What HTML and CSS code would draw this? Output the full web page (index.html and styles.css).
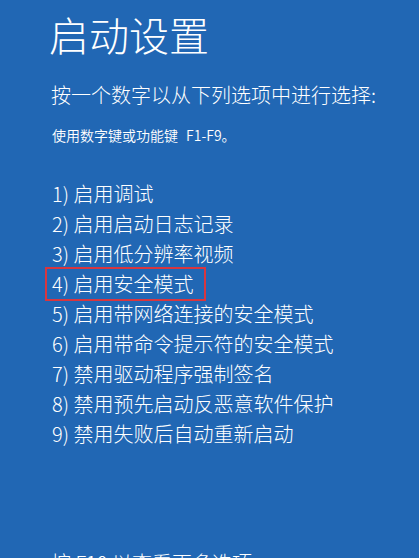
FILE: index.html
```html
<!DOCTYPE html>
<html lang="zh-CN">
<head>
<meta charset="utf-8">
<title>启动设置</title>
<link rel="stylesheet" href="styles.css">
</head>
<body>
<main class="screen">
  <h1 class="title">启动设置</h1>
  <p class="subtitle">按一个数字以从下列选项中进行选择:</p>
  <p class="hint">使用数字键或功能键 F1-F9。</p>
  <ol class="options">
    <li class="option">1) 启用调试</li>
    <li class="option">2) 启用启动日志记录</li>
    <li class="option">3) 启用低分辨率视频</li>
    <li class="option option-selected">4) 启用安全模式</li>
    <li class="option">5) 启用带网络连接的安全模式</li>
    <li class="option">6) 启用带命令提示符的安全模式</li>
    <li class="option">7) 禁用驱动程序强制签名</li>
    <li class="option">8) 禁用预先启动反恶意软件保护</li>
    <li class="option">9) 禁用失败后自动重新启动</li>
  </ol>
  <p class="more">按 F10 以查看更多选项</p>
</main>
</body>
</html>
```

FILE: styles.css
```css
html, body {
  margin: 0;
  padding: 0;
  background: #2167b4;
}

body {
  width: 419px;
  height: 558px;
  overflow: hidden;
  color: #ffffff;
  font-family: "Noto Sans CJK SC", "Noto Sans", sans-serif;
}

.screen {
  display: flex;
  flex-direction: column;
  padding-left: 50px;
}

.title {
  margin: 10px 0 0 -1px;
  font-size: 40px;
  line-height: 48px;
  font-weight: 300;
}

.subtitle {
  margin: 22px 0 0 1px;
  font-size: 20px;
  line-height: 30px;
  font-weight: 300;
}

.hint {
  margin: 15px 0 0 2px;
  font-size: 14px;
  line-height: 20px;
  font-weight: 350;
  word-spacing: 5px;
}

.options {
  list-style: none;
  margin: 34px 0 0 0;
  padding: 0;
  display: flex;
  flex-direction: column;
}

.option {
  font-size: 20px;
  line-height: 30px;
  font-weight: 300;
  padding-left: 2px;
}

.option-selected {
  width: fit-content;
  margin-left: -3px;
  padding-left: 5px;
  padding-right: 11px;
  outline: 2px solid #d8363f;
}

.more {
  margin: 99px 0 0 1px;
  font-size: 20px;
  line-height: 30px;
  font-weight: 300;
}
```
